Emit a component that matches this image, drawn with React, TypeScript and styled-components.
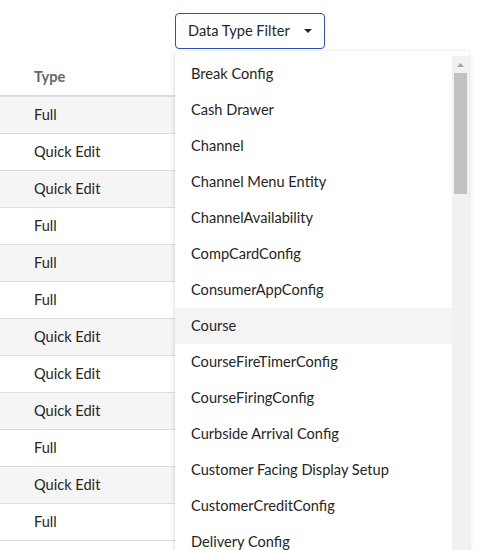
import styled, { createGlobalStyle } from 'styled-components';

const GlobalStyle = createGlobalStyle`
	html, body {
		margin: 0;
		padding: 0;
		background: #ffffff;
	}
	body {
		font-family: Lato, "Liberation Sans", sans-serif;
		color: #252525;
	}
`;

const Page = styled.div`
	position: relative;
	width: 494px;
	height: 550px;
	overflow: hidden;
`;

const Toolbar = styled.div`
	display: flex;
	padding: 13px 0 0 175px;
	height: 36px;
	margin-bottom: 9px;
`;

const FilterButton = styled.button`
	display: flex;
	align-items: center;
	justify-content: space-between;
	box-sizing: border-box;
	width: 150px;
	height: 36px;
	padding: 0 12px 1px 12px;
	border: 1px solid #2b4fbd;
	border-radius: 4px;
	background: #ffffff;
	font-family: inherit;
	font-size: 14.6px;
	color: #252525;
`;

const Table = styled.div`
	width: 460px;
`;

const HeaderRow = styled.div`
	display: flex;
	align-items: center;
	height: 36px;
	padding: 0 0 1px 34px;
	border-bottom: 2px solid #dddddd;
	font-size: 14.6px;
	font-weight: 700;
	color: #666666;
`;

const Row = styled.div<{ $shaded: boolean }>`
	display: flex;
	align-items: center;
	height: 35px;
	padding: 0 0 1px 34px;
	border-bottom: 1px solid #dddddd;
	background: ${(p) => (p.$shaded ? '#f5f5f5' : '#ffffff')};
	font-size: 14.6px;
`;

const Menu = styled.div`
	position: absolute;
	top: 51px;
	left: 175px;
	width: 294px;
	height: 520px;
	padding-top: 5px;
	display: flex;
	background: #ffffff;
	border-radius: 4px;
	box-shadow: 0 1px 5px rgba(0, 0, 0, 0.18);
	overflow: hidden;
`;

const MenuList = styled.div`
	flex: 1;
	overflow: hidden;
`;

const MenuItem = styled.div<{ $active?: boolean }>`
	display: flex;
	align-items: center;
	height: 35px;
	padding: 0 0 1px 16px;
	font-size: 14.6px;
	color: #252525;
	background: ${(p) => (p.$active ? '#f4f4f4' : 'transparent')};
`;

const ScrollTrack = styled.div`
	width: 17px;
	display: flex;
	flex-direction: column;
	align-items: center;
	background: #f1f1f1;
`;

const ScrollArrow = styled.div`
	height: 17px;
	display: flex;
	align-items: center;
	justify-content: center;
`;

const ScrollThumb = styled.div`
	width: 13px;
	height: 121px;
	background: #c1c1c1;
`;

const rows = [
	'Full',
	'Quick Edit',
	'Quick Edit',
	'Full',
	'Full',
	'Full',
	'Quick Edit',
	'Quick Edit',
	'Quick Edit',
	'Full',
	'Quick Edit',
	'Full'
];

const dataTypes = [
	'Break Config',
	'Cash Drawer',
	'Channel',
	'Channel Menu Entity',
	'ChannelAvailability',
	'CompCardConfig',
	'ConsumerAppConfig',
	'Course',
	'CourseFireTimerConfig',
	'CourseFiringConfig',
	'Curbside Arrival Config',
	'Customer Facing Display Setup',
	'CustomerCreditConfig',
	'Delivery Config'
];

function App() {
	return (
		<>
			<GlobalStyle />
			<Page>
				<Toolbar>
					<FilterButton>
						Data Type Filter
						<svg width="8" height="4" viewBox="0 0 8 4">
							<path d="M0 0 L8 0 L4 4 Z" fill="#252525" />
						</svg>
					</FilterButton>
				</Toolbar>
				<Table>
					<HeaderRow>Type</HeaderRow>
					{rows.map((type, index) => (
						<Row key={index} $shaded={index % 2 === 0}>
							{type}
						</Row>
					))}
				</Table>
				<Menu>
					<MenuList>
						{dataTypes.map((name) => (
							<MenuItem key={name} $active={name === 'Course'}>
								{name}
							</MenuItem>
						))}
					</MenuList>
					<ScrollTrack>
						<ScrollArrow>
							<svg width="7" height="4" viewBox="0 0 7 4">
								<path d="M3.5 0 L7 4 L0 4 Z" fill="#a3a3a3" />
							</svg>
						</ScrollArrow>
						<ScrollThumb />
					</ScrollTrack>
				</Menu>
			</Page>
		</>
	);
}

export default App;
